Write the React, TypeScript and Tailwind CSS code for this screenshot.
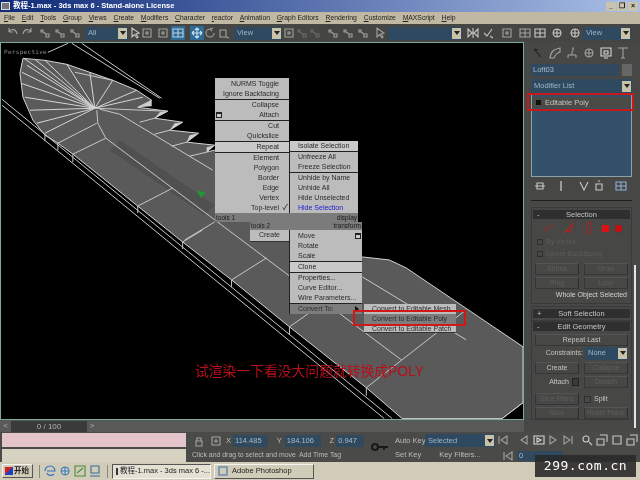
import type { ReactNode } from "react";

const sans = "font-['Liberation_Sans','Noto_Sans_CJK_SC',sans-serif]";

const menus = ["File", "Edit", "Tools", "Group", "Views", "Create", "Modifiers", "Character", "reactor", "Animation", "Graph Editors", "Rendering", "Customize", "MAXScript", "Help"];

function Arrow({ className }: { className: string }) {
  return (
    <div className={`flex items-center justify-center bg-[#c8c2a8] ${className}`}>
      <div className="w-0 h-0 border-x-[3px] border-x-transparent border-t-[4px] border-t-[#222]" />
    </div>
  );
}

function Drop({ label, className }: { label: string; className: string }) {
  return (
    <div className={`flex items-center justify-between h-[13px] bg-[#2f4a60] pl-[3px] pr-[1px] text-[7.5px] text-[#9db4c4] ${className}`}>
      <span>{label}</span>
      <Arrow className="w-[9px] h-[11px]" />
    </div>
  );
}

function Tool({ d, className = "text-[#a2a29e]", box = false }: { d: string; className?: string; box?: boolean }) {
  return (
    <svg width="14" height="14" viewBox="0 0 14 14" fill="none" stroke="currentColor" strokeWidth="1.1" className={`shrink-0 ${className} ${box ? "bg-[#2d6a96]" : ""}`}>
      <path d={d} />
    </svg>
  );
}

const undo = "M3 6 C5 2 10 3 11 8 M3 6 L3 2 M3 6 L7 6";
const redo = "M11 6 C9 2 4 3 3 8 M11 6 L11 2 M11 6 L7 6";
const link = "M3 4 L5 4 L5 6 L3 6 Z M8 8 L11 8 L11 11 L8 11 Z M5 6 L8 8";
const cursor = "M4 2 L4 11 L6.5 8.5 L9 12 L10 11 L8 8 L11 7 Z";
const rect = "M3 3 H11 V11 H3 Z M6 6 H8 V8 H6 Z";
const move = "M7 2 V12 M2 7 H12 M7 2 L5 4 M7 2 L9 4 M7 12 L5 10 M7 12 L9 10 M2 7 L4 5 M2 7 L4 9 M12 7 L10 5 M12 7 L10 9";
const rotate = "M11 7 A4 4 0 1 1 7 3 M7 3 L10 2 M7 3 L9 5";
const scale = "M3 4 H9 V11 H3 Z M9 11 L12 12";
const mirror = "M2 3 L6 7 L2 11 Z M12 3 L8 7 L12 11 Z M7 2 V12";
const check = "M3 7 L6 10 L11 3 M9 10 L12 12";
const grid = "M2 3 H12 V11 H2 Z M7 3 V11 M2 7 H12";
const sphere = "M7 3 A4 4 0 1 0 7.1 3 M3 7 H11 M7 3 V11";

function Row({ t, left, dark, light, box, tick, blue }: { t: string; left?: boolean; dark?: boolean; light?: boolean; box?: boolean; tick?: boolean; blue?: boolean }) {
  return (
    <div className={`relative flex items-center h-[10px] whitespace-nowrap ${left ? "pl-[8px]" : "justify-end pr-[10px]"} ${dark ? "bg-[#7d7d7d]" : light ? "bg-[#c9c9c9]" : ""} ${blue ? "text-[#2020d0]" : ""}`}>
      {box && <div className="absolute left-[1px] top-[2px] w-[6px] h-[6px] border border-[#222] border-t-2 bg-[#ccc]" />}
      <span>{t}</span>
      {tick && <span className="absolute right-[1px] text-[8px] text-[#111]">✓</span>}
    </div>
  );
}

const Sep = () => <div className="h-[1px] bg-[#222]" />;

function Panel({ className, children }: { className: string; children: ReactNode }) {
  return <div className={`absolute bg-[#bcbcbc] text-[7px] text-[#2b2b2b] ${className}`}>{children}</div>;
}

function QuadMenu() {
  return (
    <>
      <Panel className="left-[214px] top-[35px] w-[74px] pt-[1px]">
        <Row t="NURMS Toggle" />
        <Row t="Ignore Backfacing" />
        <Sep />
        <Row t="Collapse" />
        <Row t="Attach" box />
        <Sep />
        <Row t="Cut" />
        <Row t="Quickslice" />
        <Sep />
        <Row t="Repeat" light />
        <Sep />
        <Row t="Element" />
        <Row t="Polygon" />
        <Row t="Border" />
        <Row t="Edge" />
        <Row t="Vertex" />
        <Row t="Top-level" tick />
      </Panel>
      <Panel className="left-[288px] top-[98px] w-[69px] border-l border-[#222]">
        <Row t="Isolate Selection" left light />
        <Sep />
        <Row t="Unfreeze All" left />
        <Row t="Freeze Selection" left />
        <Sep />
        <Row t="Unhide by Name" left />
        <Row t="Unhide All" left />
        <Row t="Hide Unselected" left />
        <Row t="Hide Selection" left blue />
      </Panel>
      <div className="absolute left-[214px] top-[170px] w-[143px] h-[9px] bg-[#7b7b7b] flex items-center justify-between px-[1px] text-[6.5px] text-[#1c1c1c]">
        <span>tools 1</span>
        <span>display</span>
      </div>
      <div className="absolute left-[249px] top-[179px] w-[112px] h-[8px] bg-[#7b7b7b] flex items-center justify-between px-[1px] text-[6.5px] text-[#1c1c1c]">
        <span>tools 2</span>
        <span>transform</span>
      </div>
      <Panel className="left-[249px] top-[187px] w-[39px] h-[12px] border-b border-[#333]">
        <div className="flex h-[10px] items-center justify-center">Create</div>
      </Panel>
      <Panel className="left-[288px] top-[187px] w-[73px] pt-[1px] border-l border-[#222]">
        <Row t="Move" left />
        <Row t="Rotate" left />
        <Row t="Scale" left />
        <Sep />
        <Row t="Clone" left light />
        <Sep />
        <Row t="Properties..." left />
        <Row t="Curve Editor..." left />
        <Row t="Wire Parameters..." left />
        <Sep />
        <div className="relative">
          <Row t="Convert To:" left dark />
          <div className="absolute right-[3px] top-[2px] w-0 h-0 border-y-[3px] border-y-transparent border-l-[4px] border-l-[#111]" />
        </div>
        <div className="absolute right-[1px] top-[3px] w-[6px] h-[6px] border border-[#222] border-t-2 bg-[#ccc]" />
      </Panel>
      <Panel className="left-[363px] top-[261px] w-[92px] h-[29px] border-b border-[#333]">
        <Row t="Convert to Editable Mesh" left />
        <Row t="Convert to Editable Poly" left dark />
        <Row t="Convert to Editable Patch" left />
      </Panel>
      <div className="absolute left-[352px] top-[267px] w-[113px] h-[16px] border-2 border-[#d01818]" />
    </>
  );
}

function Wire() {
  const hub = [95, 108];
  const spokes = [[24, 58], [35, 59], [45, 60], [67, 64], [90, 72], [113, 80], [137, 90], [143, 97], [27, 65], [22, 72], [21, 83], [25, 97], [30, 110], [37, 123], [45, 133]];
  const lines = [
    [97, 110, 98, 123], [98, 123, 106, 138], [106, 138, 402, 360], [120, 114, 213, 170], [363, 277, 467, 340],
    [73, 154, 106, 138], [58, 143, 97, 123], [138, 206, 173, 188], [185, 240, 215, 222], [183, 242, 203, 230],
    [232, 280, 267, 258], [290, 327, 310, 313], [367, 388, 467, 310], [100, 109, 120, 114], [95, 108, 168, 111],
    [155, 118, 140, 122], [170, 130, 155, 134], [187, 142, 172, 146], [207, 152, 190, 156], [72, 43, 160, 98],
    [82, 43, 162, 98], [48, 52, 68, 43], [75, 72, 113, 80], [2, 99, 393, 419], [2, 105, 385, 419], [503, 419, 524, 403],
    [45, 135, 45, 141], [58, 143, 58, 150], [73, 154, 73, 162], [138, 206, 138, 213], [183, 242, 183, 249], [232, 280, 232, 287], [290, 327, 290, 335], [367, 388, 367, 396],
  ];
  return (
    <svg viewBox="1 43 523 376" className="block w-full h-full">
      <polygon
        points="23,58 45,60 67,64 90,72 113,80 137,90 152,100 138,107 168,111 155,118 183,122 170,130 199,133 187,142 215,145 207,152 215,150 363,257 390,260 407,268 524,347 524,403 503,419 403,419 367,388 290,327 232,280 183,242 138,206 73,154 58,143 45,135 33,120 23,97 20,73"
        fill="#5a5a5a"
        stroke="#d4d4d4"
        strokeWidth="1"
      />
      <polygon points="120,140 215,205 205,215 110,150" fill="#505050" />
      {[[138, 107, 152, 100, 152, 106], [155, 118, 168, 111, 160, 112], [170, 130, 183, 122, 175, 123], [187, 142, 199, 133, 190, 135], [207, 152, 215, 145, 207, 147]].map((p, i) => (
        <polygon key={i} points={`${p[0]},${p[1]} ${p[2]},${p[3]} ${p[4]},${p[5]}`} fill="#cfcfcf" />
      ))}
      {spokes.map(([x, y], i) => (
        <line key={i} x1={hub[0]} y1={hub[1]} x2={x} y2={y} stroke="#d6d6d6" strokeWidth="1" />
      ))}
      {lines.map((l, i) => (
        <line key={i} x1={l[0]} y1={l[1]} x2={l[2]} y2={l[3]} stroke="#c8c8c8" strokeWidth="1" />
      ))}
      <polygon points="197,190 206,193 201,198" fill="#1d9a30" />
    </svg>
  );
}

function Btn({ t, dim, className = "" }: { t: string; dim?: boolean; className?: string }) {
  return (
    <div className={`flex items-center justify-center h-[12px] border border-[#363636] border-r-[#2e2e2e] border-t-[#555] text-[7px] ${dim ? "text-[#5f5f5f]" : "text-[#c4c4c4]"} ${className}`}>
      {t}
    </div>
  );
}

function Head({ t, mark }: { t: string; mark: string }) {
  return (
    <div className="relative flex items-center justify-center h-[9px] bg-[#2f2f2f] text-[7.5px] text-[#c4c4c4]">
      <span className="absolute left-[4px]">{mark}</span>
      {t}
    </div>
  );
}

function Side() {
  return (
    <div className="relative w-[116px] h-[390px] shrink-0 overflow-hidden bg-[#474745] pl-[7px] pr-[8px] pt-[3px]">
      <div className="flex h-[15px] items-center justify-between pr-[2px]">
        <Tool d="M3 3 L10 11 M3 3 L7 4" className="text-[#222]" />
        <Tool d="M2 12 C3 5 6 3 12 2 L12 6 C9 7 7 9 6 12 Z" />
        <Tool d="M7 2 H8 V5 M3 9 H11 M3 9 V12 M11 9 V12 M7 5 V9" />
        <Tool d={sphere} />
        <Tool d="M2 2 H12 V10 H2 Z M5 12 H9 M5 5 H9 V8 H5 Z" className="text-[#d8d8d8]" />
        <Tool d="M2 2 H12 M7 2 V12 M5 12 H9" />
      </div>
      <div className="mt-[4px] flex h-[12px] gap-[3px]">
        <div className="flex-1 bg-[#30495e] pl-[2px] text-[7.5px] leading-[12px] text-[#a6bccb]">Loft03</div>
        <div className="w-[10px] bg-[#666]" />
      </div>
      <Drop label="Modifier List" className="mt-[3px] h-[14px]" />
      <div className="mt-[1px] h-[83px] border-x border-b border-[#8aa4a8] bg-[#35506a] pt-[3px]">
        <div className="flex h-[11px] items-center gap-[4px] bg-[#4a4a46] pl-[4px] text-[7.5px] text-[#c4c4c4]">
          <div className="h-[5px] w-[5px] bg-[#111]" />
          Editable Poly
        </div>
      </div>
      <div className="absolute left-[3px] top-[51px] h-[18px] w-[107px] border-2 border-[#c81818]" />
      <div className="mt-[3px] flex h-[12px] items-center pl-[2px]">
        <Tool d="M2 7 H12 M4 4 H10 V10 H4 Z" className="text-[#c8c8c8]" />
        <Tool d="M7 2 V12" className="ml-[7px] text-[#e0e0e0]" />
        <Tool d="M3 3 L7 11 L11 3" className="ml-[9px] text-[#c8c8c8]" />
        <Tool d="M4 5 H10 V11 H4 Z M6 2 H8" className="ml-[1px] text-[#c8c8c8]" />
        <Tool d={grid} className="ml-[8px] text-[#8fb0d8]" />
      </div>
      <div className="mt-[8px] h-[1px] bg-[#1e1e1e]" />

      <div className="mt-[6px] h-[97px] border border-[#3a3a3a] px-[1px] pt-[2px]">
        <Head t="Selection" mark="-" />
        <div className="mt-[3px] flex h-[12px] items-center justify-center gap-[6px]">
          <Tool d="M2 10 L6 7 L11 4" className="text-[#a02626]" />
          <Tool d="M3 11 L11 3 L9 10 Z" className="text-[#b02222]" />
          <Tool d="M5 2 H9 L8 12 H5 Z" className="text-[#a02626]" />
          <div className="h-[7px] w-[7px] bg-[#e01010]" />
          <div className="h-[7px] w-[7px] rotate-12 bg-[#c01010] outline outline-1 outline-[#444]" />
        </div>
        <div className="mt-[3px] flex h-[10px] items-center gap-[3px] pl-[4px] text-[7px] text-[#5c5c5c]">
          <div className="h-[6px] w-[6px] border border-[#2e2e2e]" />
          By Vertex
        </div>
        <div className="mt-[2px] flex h-[10px] items-center gap-[3px] pl-[4px] text-[7px] text-[#5c5c5c]">
          <div className="h-[6px] w-[6px] border border-[#2e2e2e]" />
          Ignore Backfacing
        </div>
        <div className="mt-[4px] grid grid-cols-2 gap-[5px] px-[2px]">
          <Btn t="Shrink" dim />
          <Btn t="Grow" dim />
        </div>
        <div className="mt-[2px] grid grid-cols-2 gap-[5px] px-[2px]">
          <Btn t="Ring" dim />
          <Btn t="Loop" dim />
        </div>
        <div className="mt-[1px] pr-[3px] text-right text-[7px] leading-[10px] text-[#d4d4d4]">Whole Object Selected</div>
      </div>

      <div className="mt-[2px] border border-[#3a3a3a] px-[1px] py-[2px]">
        <Head t="Soft Selection" mark="+" />
      </div>
      <div className="border border-[#3a3a3a] px-[1px]">
        <Head t="Edit Geometry" mark="-" />
        <Btn t="Repeat Last" className="mt-[3px] mx-[2px]" />
        <div className="mt-[1px] flex h-[12px] items-center justify-end gap-[2px] pr-[2px] text-[7px] text-[#c4c4c4]">
          Constraints:
          <Drop label="None" className="h-[12px] w-[43px]" />
        </div>
        <div className="mt-[3px] grid grid-cols-2 gap-[5px] px-[2px]">
          <Btn t="Create" />
          <Btn t="Collapse" dim />
        </div>
        <div className="mt-[2px] grid grid-cols-2 gap-[5px] px-[2px]">
          <div className="flex items-center justify-end gap-[3px] text-[7px] text-[#c4c4c4]">
            Attach
            <div className="h-[8px] w-[7px] border border-[#222] bg-[#3a3a3a]" />
          </div>
          <Btn t="Detach" dim />
        </div>
        <div className="mt-[5px] grid grid-cols-2 gap-[5px] px-[2px]">
          <Btn t="Slice Plane" dim />
          <div className="flex h-[12px] items-center gap-[3px] text-[7px] text-[#c4c4c4]">
            <div className="h-[7px] w-[7px] border border-[#2e2e2e]" />
            Split
          </div>
        </div>
        <div className="mt-[2px] grid grid-cols-2 gap-[5px] px-[2px]">
          <Btn t="Slice" dim />
          <Btn t="Reset Plane" dim />
        </div>
      </div>
      <div className="absolute right-[4px] top-[223px] h-[163px] w-[2px] bg-[#e4e4e4]" />
    </div>
  );
}

function Taskbar() {
  return (
    <div className="flex h-[18px] items-center bg-[#d0ccb8] pl-[2px] text-[7.5px] text-[#222]">
      <div className="flex h-[14px] w-[31px] items-center gap-[1px] border border-[#f4f4f0] border-r-[#555] border-b-[#555] pl-[2px] font-bold">
        <div className="h-[8px] w-[8px] bg-[linear-gradient(135deg,#d02020_50%,#2040c0_50%)]" />
        开始
      </div>
      <div className="ml-[6px] h-[13px] w-[1px] bg-[#888]" />
      <div className="ml-[3px] flex w-[62px] items-center gap-[1px]">
        <Tool d="M2 7 A5 5 0 1 1 12 7 H4 M11 10 C9 12 5 12 4 9" className="text-[#2f6fc8]" />
        <Tool d={sphere} className="text-[#3f7fc0]" />
        <Tool d="M2 2 H12 V12 H2 Z M4 9 L10 4" className="text-[#4c8a3c]" />
        <Tool d="M3 2 H11 V9 H3 Z M2 12 H12" className="text-[#3b6a9c]" />
      </div>
      <div className="ml-[2px] h-[13px] w-[1px] bg-[#888]" />
      <div className="ml-[4px] flex h-[15px] w-[99px] items-center gap-[2px] border border-[#555] border-r-[#f4f4f0] border-b-[#f4f4f0] bg-[#e4e0d4] pl-[3px] whitespace-nowrap">
        <div className="h-[7px] w-[9px] border border-[#333] bg-[#aaa]" />
        教程-1.max - 3ds max 6 -...
      </div>
      <div className="ml-[3px] flex h-[15px] w-[100px] items-center gap-[2px] border border-[#f4f4f0] border-r-[#555] border-b-[#555] pl-[1px] whitespace-nowrap">
        <Tool d="M3 3 H11 V11 H3 Z" className="text-[#3a6fb0]" />
        Adobe Photoshop
      </div>
    </div>
  );
}

function Bottom() {
  return (
    <div className="flex h-[30px] bg-[#4a4a48] text-[7.5px] text-[#bcbcbc]">
      <div className="flex w-[186px] shrink-0 flex-col gap-[2px] pl-[2px] pt-[1px]">
        <div className="h-[14px] bg-[#e3c4c8]" />
        <div className="h-[13px] bg-[#d8d2c2]" />
      </div>
      <div className="ml-[6px] flex w-[172px] shrink-0 flex-col pt-[2px]">
        <div className="flex h-[13px] items-center">
          <Tool d="M4 7 H10 V12 H4 Z M5 7 V4 H9 V7" />
          <Tool d="M3 3 H11 V11 H3 Z M7 5 V9 M5 7 H9" className="ml-[3px] text-[#a2a29e]" />
          <span className="ml-[3px]">X</span>
          <div className="ml-[2px] h-[12px] w-[35px] bg-[#30495e] pl-[2px] leading-[12px] text-[#a6bccb]">114.485</div>
          <span className="ml-[9px]">Y</span>
          <div className="ml-[3px] h-[12px] w-[36px] bg-[#30495e] pl-[2px] leading-[12px] text-[#a6bccb]">184.106</div>
          <span className="ml-[9px]">Z</span>
          <div className="ml-[2px] h-[12px] w-[28px] bg-[#30495e] pl-[2px] leading-[12px] text-[#a6bccb]">0.947</div>
        </div>
        <div className="mt-[2px] flex h-[12px] items-center whitespace-nowrap text-[6.9px]">
          <span className="w-[107px] shrink-0">Click and drag to select and move</span>
          <span>Add Time Tag</span>
        </div>
      </div>
      <svg width="18" height="10" viewBox="0 0 18 10" className="ml-[7px] mt-[10px] shrink-0 text-[#181818]" fill="none" stroke="currentColor" strokeWidth="2">
        <circle cx="4" cy="5" r="3" />
        <path d="M7 5 H17 M13 5 V8" />
      </svg>
      <div className="ml-[6px] flex w-[100px] shrink-0 flex-col gap-[2px] pt-[2px]">
        <div className="flex h-[13px] items-center">
          <span className="w-[30px] shrink-0 whitespace-nowrap">Auto Key</span>
          <Drop label="Selected" className="flex-1" />
        </div>
        <div className="flex h-[12px] items-center">
          <span className="w-[30px] shrink-0 whitespace-nowrap">Set Key</span>
          <span className="flex-1 text-center">Key Filters...</span>
        </div>
      </div>
      <div className="ml-[1px] flex flex-col pt-[1px]">
        <div className="flex h-[14px] items-center">
          <Tool d="M3 3 V11 M11 3 L5 7 L11 11 Z" />
          <Tool d="M10 3 L4 7 L10 11 Z" className="ml-[7px] text-[#a2a29e]" />
          <Tool d="M2 3 H12 V11 H2 Z M5 5 L9 7 L5 9 Z" className="ml-[1px] text-[#d8d8d8]" />
          <Tool d="M4 3 L10 7 L4 11 Z" />
          <Tool d="M11 3 V11 M3 3 L9 7 L3 11 Z" className="ml-[1px] text-[#a2a29e]" />
          <Tool d="M6 6 m-3 0 a3 3 0 1 0 6 0 a3 3 0 1 0 -6 0 M9 9 L12 12" className="ml-[5px] text-[#c8c8c8]" />
          <Tool d="M2 6 H9 V12 H2 Z M5 2 H12 V9" className="ml-[1px] text-[#c8c8c8]" />
          <Tool d="M3 3 H11 V11 H3 Z" className="ml-[1px] text-[#c8c8c8]" />
          <Tool d="M2 6 H9 V12 H2 Z M5 2 H12 V9" className="ml-[1px] text-[#c8c8c8]" />
        </div>
        <div className="mt-[2px] flex items-center">
          <Tool d="M3 3 V11 M11 3 L5 7 L11 11 Z" className="ml-[5px] text-[#a2a29e]" />
          <div className="ml-[2px] h-[10px] w-[46px] bg-[#30495e] pl-[2px] text-[#a6bccb] leading-[10px]">0</div>
        </div>
      </div>
    </div>
  );
}

export default function App() {
  return (
    <div className={`relative flex h-[480px] w-[640px] flex-col overflow-hidden bg-[#4a4a48] blur-[0.3px] ${sans}`}>
      {/* Title */}
      <div className="flex h-[12px] items-center bg-[linear-gradient(90deg,#0e2a78,#a9bfe6)] pl-[1px] pr-[2px] text-[7.5px] font-bold text-white">
        <div className="mr-[3px] h-[8px] w-[9px] border border-[#ddd] bg-[#777]" />
        教程-1.max - 3ds max 6 - Stand-alone License
        <div className="ml-auto flex gap-[1px]">
          {["_", "❐", "×"].map((c) => (
            <div key={c} className="flex h-[9px] w-[10px] items-center justify-center bg-[#c8c4b0] text-[7px] text-[#111]">{c}</div>
          ))}
        </div>
      </div>
      {/* Menu */}
      <div className="flex h-[12px] items-center gap-[6.8px] bg-[#c0b8a2] pl-[4px] text-[6.8px] text-[#222]">
        {menus.map((m) => (
          <span key={m} className="whitespace-nowrap">
            <u>{m[0]}</u>
            {m.slice(1)}
          </span>
        ))}
      </div>
      {/* Toolbar */}
      <div className="flex h-[18px] items-center bg-[#454543] pl-[6px]">
        <Tool d={undo} />
        <Tool d={redo} />
        <Tool d={link} className="ml-[4px] text-[#a2a29e]" />
        <Tool d={link} className="ml-[1px] text-[#a2a29e]" />
        <Tool d={link} className="ml-[1px] text-[#a2a29e]" />
        <Drop label="All" className="ml-[3px] w-[43px]" />
        <Tool d={cursor} className="text-[#c8c8c8]" />
        <Tool d={rect} className="ml-[-2px] text-[#a2a29e]" />
        <Tool d={rect} className="ml-[2px] text-[#a2a29e]" />
        <Tool d={grid} className="ml-[1px] text-[#b8d0e4]" box />
        <Tool d={move} className="ml-[5px] text-[#d0e4f0]" box />
        <Tool d={rotate} className="ml-[-1px] text-[#a2a29e]" />
        <Tool d={scale} />
        <Drop label="View" className="ml-[3px] w-[48px]" />
        <Tool d={rect} />
        <Tool d={link} className="ml-[-1px] text-[#6c6c6a]" />
        <Tool d={link} className="ml-[-1px] text-[#6c6c6a]" />
        <Tool d={link} className="ml-[4px] text-[#a2a29e]" />
        <Tool d={link} className="ml-[1px] text-[#a2a29e]" />
        <Tool d={link} className="ml-[1px] text-[#a2a29e]" />
        <Tool d={cursor} className="ml-[3px] text-[#a2a29e]" />
        <Drop label="" className="ml-[1px] w-[74px]" />
        <Tool d={mirror} className="ml-[4px] text-[#c8c8c8]" />
        <Tool d={check} className="ml-[1px] text-[#c8c8c8]" />
        <Tool d={rect} className="ml-[5px] text-[#a2a29e]" />
        <Tool d={grid} className="ml-[4px] text-[#a2a29e]" />
        <Tool d={grid} className="ml-[1px] text-[#c8c8c8]" />
        <Tool d={sphere} className="ml-[3px] text-[#c8c8c8]" />
        <Tool d={sphere} className="ml-[4px] text-[#c8c8c8]" />
        <Drop label="View" className="ml-[1px] w-[48px]" />
      </div>
      {/* Main */}
      <div className="flex">
        <div className="flex w-[524px] shrink-0 flex-col">
          <div className="relative h-[378px] overflow-hidden border border-[#7fa89c] bg-black">
            <Wire />
            <span className="absolute left-[3px] top-[4px] font-['DejaVu_Sans_Mono',monospace] text-[6px] tracking-[0.3px] text-[#8a8a8a]">Perspective</span>
            <QuadMenu />
            <span className="absolute left-[194px] top-[321px] whitespace-nowrap text-[13.8px] leading-[16px] text-[#b80f1c]">试渲染一下看没大问题就转换成POLY</span>
          </div>
          <div className="flex h-[12px] items-center bg-[#595957] text-[8px] text-[#b4b4b4]">
            <span className="w-[11px] text-center">&lt;</span>
            <div className="h-[11px] w-[76px] bg-[#3a3a3a] text-center leading-[11px]">0 / 100</div>
            <span className="w-[10px] text-center">&gt;</span>
          </div>
        </div>
        <Side />
      </div>
      <Bottom />
      <Taskbar />
      {/* Watermark */}
      <div className="absolute left-[535px] top-[455px] flex h-[22px] w-[101px] items-center justify-center bg-[#2a2a2a]/90 font-['DejaVu_Sans_Mono',monospace] text-[13px] tracking-[0.5px] text-white">
        299.com.cn
      </div>
    </div>
  );
}
